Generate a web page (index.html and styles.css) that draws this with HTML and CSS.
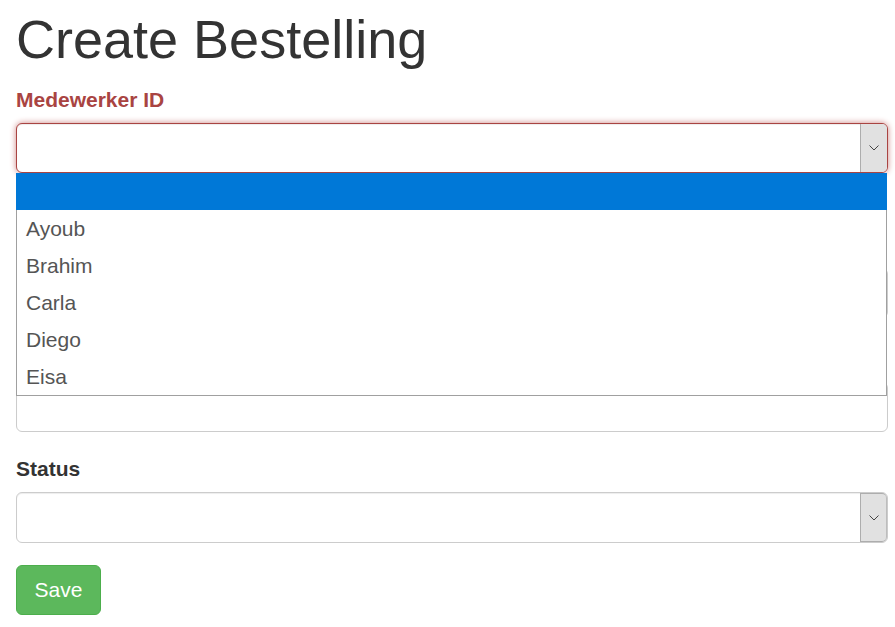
FILE: index.html
```html
<!DOCTYPE html>
<html lang="nl">
<head>
<meta charset="utf-8">
<title>Create Bestelling</title>
<link rel="stylesheet" href="styles.css">
</head>
<body>
<div class="page">
  <h1 class="title">Create Bestelling</h1>
  <form class="form">
    <div class="group group-error">
      <label class="label label-error">Medewerker ID</label>
      <div class="select select-error">
        <span class="select-value"></span>
        <span class="select-btn"><svg width="10" height="6" viewBox="0 0 10 6"><polyline points="0.5,0.5 5,5 9.5,0.5" fill="none" stroke="#444" stroke-width="1"/></svg></span>
      </div>
      <div class="dropdown">
        <div class="option option-active"></div>
        <div class="option">Ayoub</div>
        <div class="option">Brahim</div>
        <div class="option">Carla</div>
        <div class="option">Diego</div>
        <div class="option">Eisa</div>
      </div>
      <span class="help"></span>
    </div>
    <div class="group group-second">
      <span class="label label-hidden"></span>
      <div class="input"></div>
    </div>
    <div class="group">
      <span class="label label-hidden"></span>
      <div class="input"></div>
    </div>
    <div class="group">
      <label class="label">Status</label>
      <div class="select select-tall">
        <span class="select-value"></span>
        <span class="select-btn"><svg width="10" height="6" viewBox="0 0 10 6"><polyline points="0.5,0.5 5,5 9.5,0.5" fill="none" stroke="#444" stroke-width="1"/></svg></span>
      </div>
    </div>
    <button type="button" class="btn">Save</button>
  </form>
</div>
</body>
</html>
```
FILE: styles.css
```css
* { box-sizing: border-box; }
html, body { margin: 0; padding: 0; background: #fff; }
body {
  font-family: "Liberation Sans", Arial, sans-serif;
  color: #333;
}
.page {
  padding: 0 7px 0 16px;
}
.title {
  font-size: 54px;
  font-weight: 400;
  line-height: 1.1;
  margin: 10px 0 16px;
  color: #333;
}
.form { position: relative; }
.group {
  position: relative;
  margin-bottom: 22px;
}
.group-second { margin-bottom: 26px; }
.label {
  display: block;
  font-size: 21px;
  font-weight: 700;
  line-height: 30px;
  margin-bottom: 8px;
  color: #333;
}
.label-hidden { height: 30px; }
.label-error { color: #a94442; }
.help {
  display: block;
  height: 57px;
  margin-bottom: -22px;
}
.input, .select {
  height: 50px;
  border: 1px solid #ccc;
  border-radius: 6px;
  background: #fff;
  box-shadow: inset 0 1px 1px rgba(0,0,0,0.075);
}
.select-tall { height: 51px; }
.select {
  display: flex;
  align-items: stretch;
}
.select-error {
  border-color: #a94442;
  box-shadow: inset 0 1px 1px rgba(0,0,0,0.075), 0 0 6px #ce8483;
}
.select-value { flex: 1; }
.select-btn {
  width: 27px;
  background: #e1e1e1;
  border: 1px solid #adadad;
  border-right-color: #bdbdbd;
  display: flex;
  align-items: center;
  justify-content: center;
  border-radius: 0 5px 5px 0;
}
.select-error .select-btn { border-bottom: 0; border-top: 0; border-right: 0; }
.dropdown {
  position: absolute;
  top: 88px;
  left: 0;
  width: 871px;
  border: 1px solid #a0a0a0;
  border-top: 0;
  background: #fff;
  z-index: 5;
}
.option {
  height: 37px;
  line-height: 37px;
  padding-left: 9px;
  font-size: 21px;
  color: #555;
}
.option-active {
  background: #0078d7;
  margin-left: -1px;
  margin-right: -1px;
}
.btn {
  display: block;
  width: 85px;
  height: 50px;
  margin-top: 3px;
  padding: 0;
  background: #5cb85c;
  border: 1px solid #4cae4c;
  border-radius: 6px;
  color: #fff;
  font-family: "Liberation Sans", Arial, sans-serif;
  font-size: 21px;
}
```
